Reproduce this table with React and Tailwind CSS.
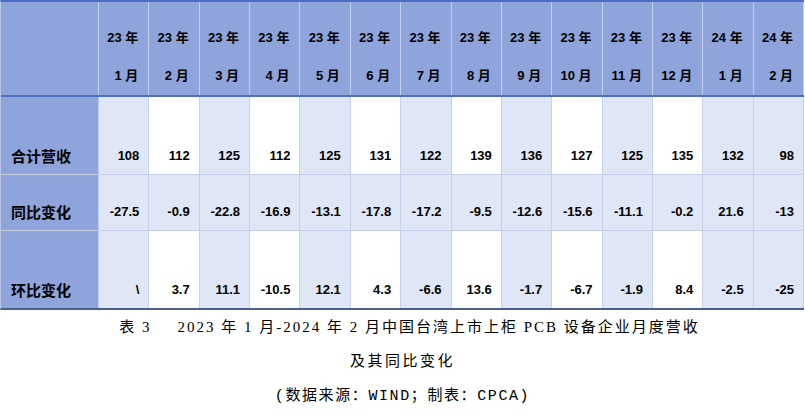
import React from 'react'

const months = [
    ['23', '1'], ['23', '2'], ['23', '3'], ['23', '4'], ['23', '5'], ['23', '6'], ['23', '7'],
    ['23', '8'], ['23', '9'], ['23', '10'], ['23', '11'], ['23', '12'], ['24', '1'], ['24', '2'],
]

const rows = [
    { label: '合计营收', h: 'h-[78px]', values: ['108', '112', '125', '112', '125', '131', '122', '139', '136', '127', '125', '135', '132', '98'] },
    { label: '同比变化', h: 'h-[56px]', allLight: true, values: ['-27.5', '-0.9', '-22.8', '-16.9', '-13.1', '-17.8', '-17.2', '-9.5', '-12.6', '-15.6', '-11.1', '-0.2', '21.6', '-13'] },
    { label: '环比变化', h: 'h-[77px]', values: ['\\', '3.7', '11.1', '-10.5', '12.1', '4.3', '-6.6', '13.6', '-1.7', '-6.7', '-1.9', '8.4', '-2.5', '-25'] },
]

const sans = { fontFamily: '"Liberation Sans", "Noto Sans CJK SC", sans-serif' }

const isLight = (i, allLight) => allLight || i % 2 === 0 || i === 13

const App = () => {
    return (
        <div className='w-[805px] h-[416px] bg-white overflow-hidden'>
            <div className='w-[804px] border-t-2 border-t-[#4a6cc2] border-b-2 border-b-[#4b5f88] border-l border-l-[#b8c5e6]' style={sans}>
                <div className='grid grid-cols-[98px_repeat(14,1fr)] h-[95px] bg-[#8ea4db] border-b-2 border-b-[#4f70c0]'>
                    <div className='border-r border-r-[#c3cff0]' />
                    {months.map(([y, m], i) => (
                        <div key={i} className='flex flex-col justify-end items-end pr-[10px] pb-[11px] gap-[22px] border-r border-r-[#c3cff0] text-[13px] font-bold text-black leading-[16px]'>
                            <span>{y} 年</span>
                            <span>{m} 月</span>
                        </div>
                    ))}
                </div>
                {rows.map((row, r) => (
                    <div key={r} className={`grid grid-cols-[98px_repeat(14,1fr)] ${row.h} ${r < 2 ? 'border-b border-b-[#c4cde6]' : ''}`}>
                        <div className='flex items-end pl-[10px] pb-[10px] bg-[#8ea4db] border-r border-r-[#c3cff0] text-[15px] font-bold text-black leading-[16px]' style={{ fontFamily: '"Noto Sans CJK SC", sans-serif' }}>
                            {row.label}
                        </div>
                        {row.values.map((v, i) => (
                            <div key={i} className={`flex items-end justify-end pr-[9px] pb-[10px] border-r border-r-[#c6d0ea] text-[13px] font-bold text-black leading-[16px] ${isLight(i, row.allLight) ? 'bg-[#dfe6f5]' : 'bg-white'}`}>
                                {v}
                            </div>
                        ))}
                    </div>
                ))}
            </div>
            <div className='flex flex-col items-center text-black leading-[34px]'>
                <p className='text-[15px] tracking-[2px] pl-[14px]' style={{ fontFamily: '"Liberation Serif", "Noto Sans CJK SC", serif' }}>
                    表 3<span className='inline-block w-[26px]' />2023 年 1 月-2024 年 2 月中国台湾上市上柜 PCB 设备企业月度营收
                </p>
                <p className='text-[15px] tracking-[2.5px]' style={{ fontFamily: '"Liberation Serif", "Noto Sans CJK SC", serif' }}>
                    及其同比变化
                </p>
                <p className='mt-[2px] text-[15px] tracking-[1.6px]' style={{ fontFamily: '"Liberation Mono", "Noto Sans CJK SC", monospace' }}>
                    (数据来源：WIND；制表：CPCA)
                </p>
            </div>
        </div>
    )
}

export default App
